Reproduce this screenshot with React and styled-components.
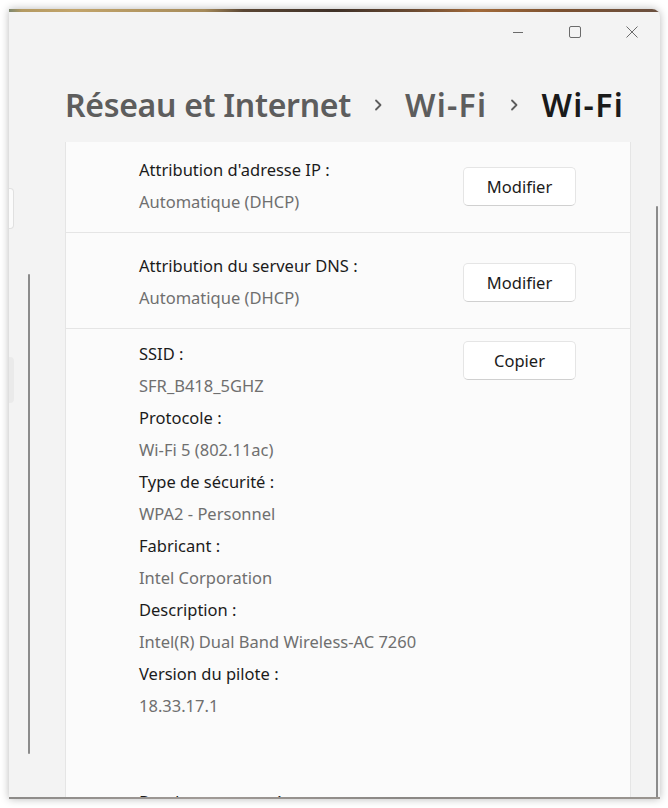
import React from 'react';
import styled, { createGlobalStyle } from 'styled-components';

const GlobalStyle = createGlobalStyle`
  html, body {
    margin: 0;
    padding: 0;
    background: #ffffff;
    font-family: "Segoe UI", "Noto Sans", "Open Sans", sans-serif;
  }
`;

const Page = styled.div`
  width: 668px;
  height: 808px;
  padding: 9px 0 0 9px;
  box-sizing: border-box;
  overflow: hidden;
`;

const Window = styled.div`
  width: 651px;
  height: 790px;
  background: #f3f3f3;
  border-top-right-radius: 8px;
  box-shadow: 0 0 9px rgba(0, 0, 0, 0.28);
  display: flex;
  flex-direction: column;
  overflow: hidden;
  position: relative;
`;

const Wallpaper = styled.div`
  height: ${(p) => p.h}px;
  flex-shrink: 0;
  background: ${(p) => p.bg};
`;

const TitleBar = styled.div`
  height: 40px;
  flex-shrink: 0;
  display: flex;
  justify-content: flex-end;
  align-items: center;
`;

const CtrlButton = styled.div`
  width: 57px;
  height: 40px;
  display: flex;
  align-items: center;
  justify-content: center;
  color: #6b6b6b;
`;

const Body = styled.div`
  flex: 1;
  display: flex;
  min-height: 0;
`;

const NavPane = styled.div`
  width: 56px;
  flex-shrink: 0;
  position: relative;
  display: flex;
  flex-direction: column;
`;

const NavStub = styled.div`
  width: 5px;
  height: ${(p) => p.h}px;
  margin-top: ${(p) => p.top}px;
  background: ${(p) => p.bg};
  border: ${(p) => (p.outlined ? '1px solid #e0e0e0' : 'none')};
  border-left: none;
  border-radius: 0 4px 4px 0;
  box-sizing: border-box;
`;

const NavScroll = styled.div`
  position: absolute;
  left: 19px;
  top: 222px;
  width: 2px;
  height: 480px;
  border-radius: 1px;
  background: #8b8b8b;
`;

const Main = styled.div`
  flex: 1;
  display: flex;
  flex-direction: column;
  min-width: 0;
`;

const Header = styled.div`
  height: 90px;
  flex-shrink: 0;
  display: flex;
  align-items: flex-start;
  padding-top: 30px;
  box-sizing: border-box;
`;

const Crumb = styled.span`
  font-size: 32px;
  font-weight: 600;
  line-height: 46px;
  letter-spacing: ${(p) => (p.wide ? '1.3px' : '-0.3px')};
  color: ${(p) => (p.current ? '#1a1a1a' : '#5d5d5d')};
`;

const Chevron = styled.span`
  width: 54px;
  display: flex;
  justify-content: center;
  align-items: center;
  height: 46px;
  color: #5d5d5d;
`;

const ScrollArea = styled.div`
  flex: 1;
  display: flex;
  min-height: 0;
  overflow: hidden;
`;

const Card = styled.div`
  width: 566px;
  flex-shrink: 0;
  margin-top: -5px;
  background: #fbfbfb;
  border: 1px solid #e5e5e5;
  border-top: none;
  border-bottom: none;
  box-sizing: border-box;
  align-self: flex-start;
`;

const Row = styled.div`
  display: flex;
  align-items: ${(p) => (p.top ? 'flex-start' : 'center')};
  padding: ${(p) => (p.top ? '9px 0 0 73px' : '17px 0 14px 73px')};
  border-bottom: ${(p) => (p.last ? 'none' : '1px solid #e5e5e5')};
`;

const Lines = styled.div`
  flex: 1;
  display: flex;
  flex-direction: column;
`;

const Label = styled.div`
  font-size: 16.5px;
  line-height: 32px;
  color: #1b1b1b;
  white-space: nowrap;
  margin-top: ${(p) => p.gap || 0}px;
`;

const Value = styled.div`
  font-size: 16.5px;
  line-height: 32px;
  color: #6f6f6f;
  white-space: nowrap;
`;

const Button = styled.button`
  width: 113px;
  height: 39px;
  margin-right: 54px;
  margin-top: ${(p) => (p.top ? '3px' : '0')};
  background: #ffffff;
  border: 1px solid #e5e5e5;
  border-bottom-color: #d0d0d0;
  border-radius: 5px;
  font-family: inherit;
  font-size: 16.5px;
  color: #1b1b1b;
  padding: 0;
`;

const Gutter = styled.div`
  flex: 1;
  position: relative;
`;

const MainScroll = styled.div`
  position: absolute;
  left: 25px;
  top: 64px;
  width: 2px;
  height: 600px;
  border-radius: 1px;
  background: #8b8b8b;
`;

const details = [
  ['SSID :', 'SFR_B418_5GHZ'],
  ['Protocole :', 'Wi-Fi 5 (802.11ac)'],
  ['Type de sécurité :', 'WPA2 - Personnel'],
  ['Fabricant :', 'Intel Corporation'],
  ['Description :', 'Intel(R) Dual Band Wireless-AC 7260'],
  ['Version du pilote :', '18.33.17.1'],
];

const ChevronIcon = () => (
  <svg width="10" height="14" viewBox="0 0 10 14">
    <path d="M3 2.5 L7.5 7 L3 11.5" fill="none" stroke="currentColor" strokeWidth="1.8" strokeLinecap="round" strokeLinejoin="round" />
  </svg>
);

export default function App() {
  return (
    <Page>
      <GlobalStyle />
      <Window>
        <Wallpaper
          h={3}
          bg="linear-gradient(90deg, #7d8870 0%, #b49a62 2%, #c2a46a 10%, #a58a5a 30%, #5a4634 36%, #3f3128 50%, #6a4a32 62%, #a26a3a 72%, #7a5030 85%, #6a5040 100%)"
        />
        <TitleBar>
          <CtrlButton>
            <svg width="12" height="12" viewBox="0 0 12 12">
              <path d="M1 6.5 H11" stroke="currentColor" strokeWidth="1" />
            </svg>
          </CtrlButton>
          <CtrlButton>
            <svg width="14" height="14" viewBox="0 0 14 14">
              <rect x="1.5" y="1.5" width="11" height="11" rx="1.5" fill="none" stroke="currentColor" strokeWidth="1" />
            </svg>
          </CtrlButton>
          <CtrlButton>
            <svg width="14" height="14" viewBox="0 0 14 14">
              <path d="M1.5 1.5 L12.5 12.5 M12.5 1.5 L1.5 12.5" stroke="currentColor" strokeWidth="1" />
            </svg>
          </CtrlButton>
        </TitleBar>
        <Body>
          <NavPane>
            <NavStub top={136} h={41} bg="#fbfbfb" outlined />
            <NavStub top={128} h={46} bg="#eaeaea" />
            <NavScroll />
          </NavPane>
          <Main>
            <Header>
              <Crumb>Réseau et Internet</Crumb>
              <Chevron><ChevronIcon /></Chevron>
              <Crumb wide>Wi-Fi</Crumb>
              <Chevron><ChevronIcon /></Chevron>
              <Crumb wide current>Wi-Fi</Crumb>
            </Header>
            <ScrollArea>
              <Card>
                <Row>
                  <Lines>
                    <Label>Attribution d'adresse IP :</Label>
                    <Value>Automatique (DHCP)</Value>
                  </Lines>
                  <Button>Modifier</Button>
                </Row>
                <Row>
                  <Lines>
                    <Label>Attribution du serveur DNS :</Label>
                    <Value>Automatique (DHCP)</Value>
                  </Lines>
                  <Button>Modifier</Button>
                </Row>
                <Row top last>
                  <Lines>
                    {details.map(([l, v]) => (
                      <React.Fragment key={l}>
                        <Label>{l}</Label>
                        <Value>{v}</Value>
                      </React.Fragment>
                    ))}
                    <Label gap={64}>Bande passante réseau :</Label>
                  </Lines>
                  <Button top>Copier</Button>
                </Row>
              </Card>
              <Gutter>
                <MainScroll />
              </Gutter>
            </ScrollArea>
          </Main>
        </Body>
        <Wallpaper h={2} bg="linear-gradient(90deg, #8c8a88, #a09a96 30%, #8a8784 60%, #9a9590 100%)" />
      </Window>
    </Page>
  );
}
